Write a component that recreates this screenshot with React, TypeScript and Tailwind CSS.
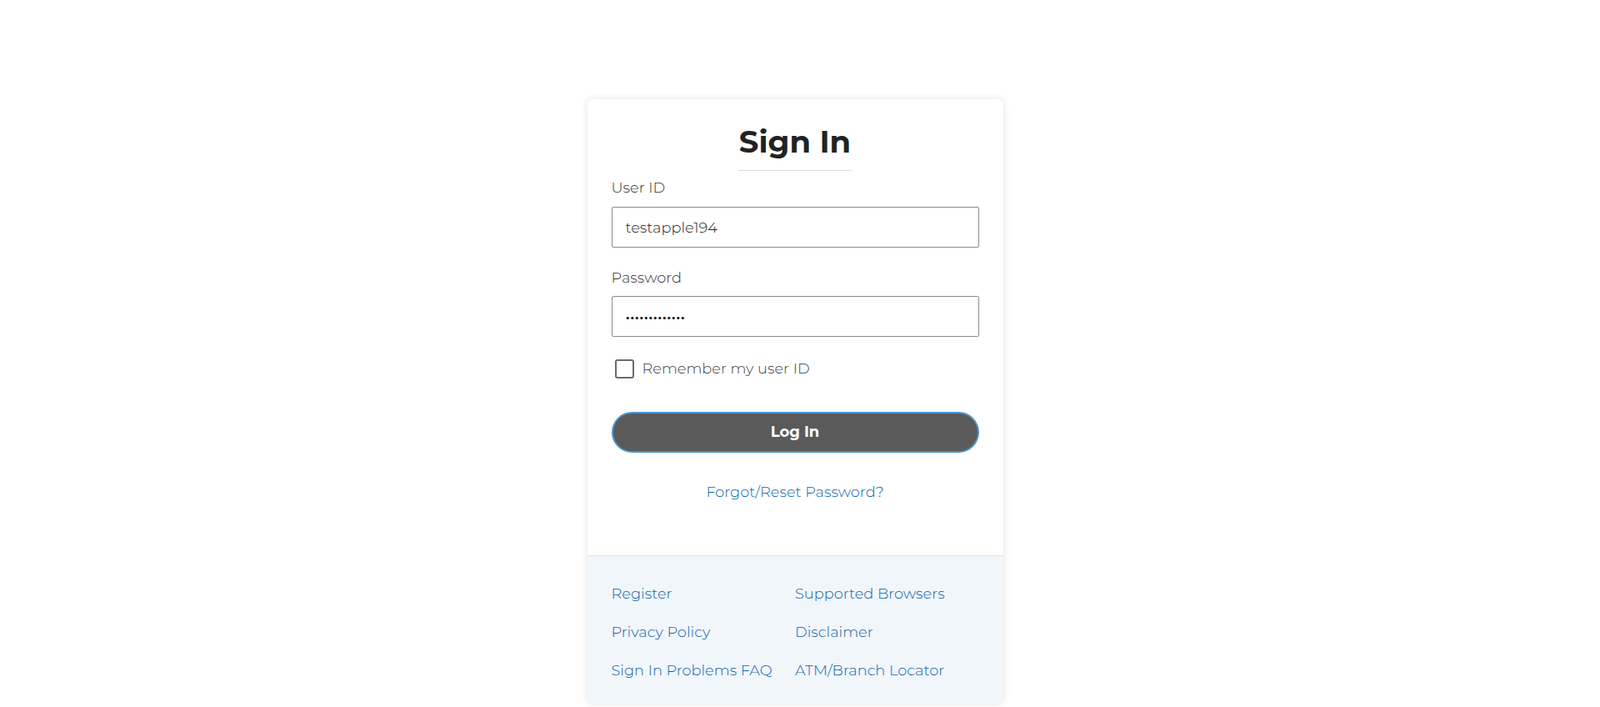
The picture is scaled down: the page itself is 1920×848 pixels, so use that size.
const links = [
  ['Register', 'Supported Browsers'],
  ['Privacy Policy', 'Disclaimer'],
  ['Sign In Problems FAQ', 'ATM/Branch Locator'],
]

const App = () => {
  return (
    <div className="min-h-screen bg-white font-['Montserrat','Inter','Open_Sans',sans-serif] flex justify-center pt-[119px] pb-[200px] pr-[12px]">
      <div className="w-[499px] rounded-md bg-white shadow-[0_0_8px_rgba(0,0,0,0.12)] overflow-hidden">
        <div className="px-[29px] pt-[29px] pb-[64px]">
          <div className="flex justify-center">
            <h1 className="text-[37px] leading-[44px] font-bold text-[#222] pb-[12px] border-b border-[#dcdcdc] px-[1px]">
              Sign In
            </h1>
          </div>

          <label className="block mt-[8px] text-[17.8px] leading-[24px] font-light text-[#333]">User ID</label>
          <input
            readOnly
            defaultValue="testapple194"
            className="mt-[11px] w-full h-[49px] border border-[#8a8a8a] rounded-[2px] px-[16px] text-[17.8px] font-light text-[#222] outline-none"
          />

          <label className="block mt-[24px] text-[17.8px] leading-[24px] font-light text-[#333]">Password</label>
          <input
            readOnly
            type="password"
            defaultValue="testapple1943"
            className="mt-[10px] w-full h-[49px] border border-[#8a8a8a] rounded-[2px] px-[16px] text-[17.5px] font-medium text-[#111] outline-none"
          />

          <div className="mt-[26px] flex items-center gap-[10px] pl-[4px]">
            <span className="w-[23px] h-[23px] rounded-[3px] border-2 border-[#6b6b6b] bg-white" />
            <span className="text-[17.8px] leading-[24px] font-light text-[#3f3f3f]">Remember my user ID</span>
          </div>

          <button className="mt-[40px] w-full h-[49px] rounded-full bg-[#5a5a5a] border-2 border-[#4a94cf] text-white text-[18px] font-bold">
            Log In
          </button>

          <p className="mt-[35px] text-center text-[17.8px] leading-[24px] font-light text-[#0f65ad]">
            Forgot/Reset Password?
          </p>
        </div>

        <div className="border-t border-[#dde2e6] bg-[#f1f6fa] px-[29px] pt-[33px] pb-[28px] flex flex-col gap-[22px]">
          {links.map(([a, b]) => (
            <div key={a} className="grid grid-cols-2 text-[17.8px] leading-[24px] font-light text-[#0f65ad]">
              <span>{a}</span>
              <span>{b}</span>
            </div>
          ))}
        </div>
      </div>
    </div>
  )
}

export default App
